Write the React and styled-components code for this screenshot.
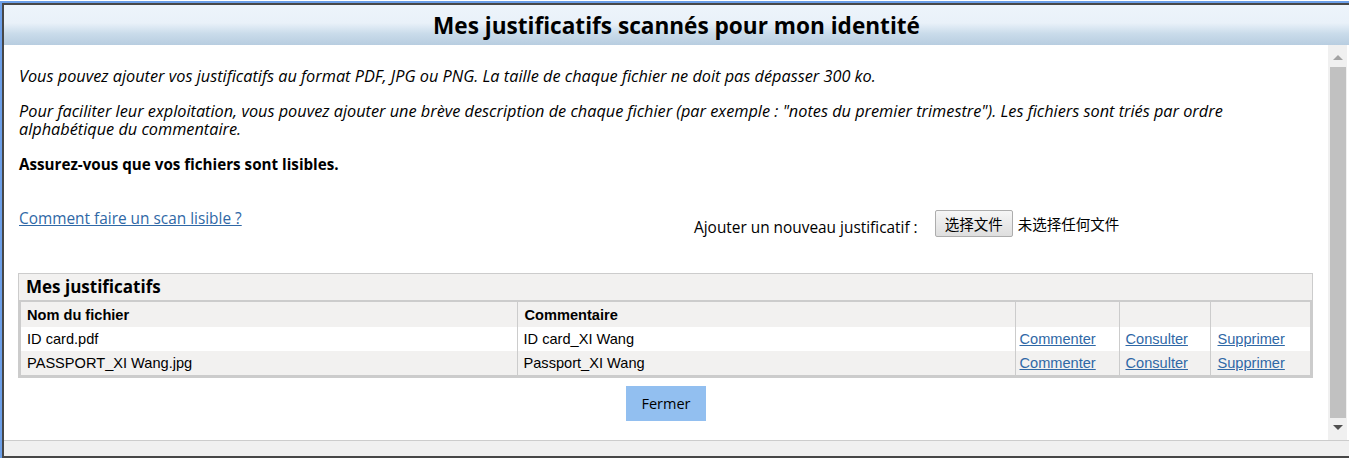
import React from 'react'
import styled, { createGlobalStyle } from 'styled-components'

const GlobalStyle = createGlobalStyle`
	html, body {
		margin: 0;
		padding: 0;
		background: #ffffff;
		overflow: hidden;
	}
	body {
		font-family: "Open Sans", "Noto Sans", sans-serif;
		color: #000;
	}
`

const files = [
	{ name: 'ID card.pdf', comment: 'ID card_XI Wang' },
	{ name: 'PASSPORT_XI Wang.jpg', comment: 'Passport_XI Wang' },
]

const App = () =>
{
	return (
		<>
		<GlobalStyle/>
		<Page>
			<Dialog>
				<Header>
					<Title>Mes justificatifs scannés pour mon identité</Title>
				</Header>
				<Middle>
					<Body>
						<Intro>Vous pouvez ajouter vos justificatifs au format PDF, JPG ou PNG. La taille de chaque fichier ne doit pas dépasser 300 ko.</Intro>
						<Intro>Pour faciliter leur exploitation, vous pouvez ajouter une brève description de chaque fichier (par exemple : "notes du premier trimestre"). Les fichiers sont triés par ordre alphabétique du commentaire.</Intro>
						<Warning>Assurez-vous que vos fichiers sont lisibles.</Warning>

						<ActionRow>
							<HelpLink href="#">Comment faire un scan lisible ?</HelpLink>
							<Upload>
								<UploadLabel>Ajouter un nouveau justificatif :</UploadLabel>
								<FileButton>选择文件</FileButton>
								<FileStatus>未选择任何文件</FileStatus>
							</Upload>
						</ActionRow>

						<Panel>
							<PanelTitle>Mes justificatifs</PanelTitle>
							<Table>
								<colgroup>
									<col style={{width: 497}}/>
									<col style={{width: 498}}/>
									<col style={{width: 104}}/>
									<col style={{width: 91}}/>
									<col/>
								</colgroup>
								<thead>
									<tr>
										<Th>Nom du fichier</Th>
										<Th>Commentaire</Th>
										<Th/>
										<Th/>
										<Th/>
									</tr>
								</thead>
								<tbody>
									{files.map((f, i) => (
										<Row key={f.name} $odd={i % 2 === 1}>
											<Td>{f.name}</Td>
											<Td>{f.comment}</Td>
											<Td $pad={4}><ActionLink href="#">Commenter</ActionLink></Td>
											<Td><ActionLink href="#">Consulter</ActionLink></Td>
											<Td $pad={7}><ActionLink href="#">Supprimer</ActionLink></Td>
										</Row>
									))}
								</tbody>
							</Table>
						</Panel>

						<ButtonRow>
							<CloseButton>Fermer</CloseButton>
						</ButtonRow>
					</Body>
					<Scrollbar>
						<Arrow $up/>
						<Thumb/>
						<Arrow/>
					</Scrollbar>
				</Middle>
				<Footer/>
			</Dialog>
		</Page>
		</>
	)
}

const Page = styled.div`
	padding: 3px 0 0 2px;
	width: 1400px;
`

const Dialog = styled.div`
	display: flex;
	flex-direction: column;
	box-sizing: border-box;
	width: 1352px;
	height: 455px;
	border: 2px solid #474747;
	box-shadow: 0 0 0 2px #6c9fe8;
	background: #fff;
`

const Header = styled.div`
	display: flex;
	justify-content: center;
	align-items: center;
	height: 40px;
	flex-shrink: 0;
	background: linear-gradient(to bottom, #edf4fb 0%, #e9f1f9 45%, #c9dbea 72%, #b8cde0 100%);
`

const Title = styled.h1`
	margin: 0;
	font-size: 22.6px;
	font-weight: 700;
	color: #000;
	margin-right: 3px;
`

const Middle = styled.div`
	display: flex;
	flex: 1;
	min-height: 0;
`

const Body = styled.div`
	flex: 1;
	padding: 22px 15px 0 15px;
	font-size: 15.4px;
`

const Intro = styled.p`
	margin: 0 0 17px;
	font-style: italic;
	font-size: 16.3px;
	line-height: 18px;
`

const Warning = styled.p`
	margin: 0;
	font-size: 15.2px;
	font-weight: 700;
	line-height: 18px;
`

const ActionRow = styled.div`
	display: grid;
	grid-template-columns: 1fr 1fr;
	margin-top: 36px;
	align-items: start;
`

const HelpLink = styled.a`
	color: #2f68a6;
	text-decoration: underline;
	line-height: 18px;
	justify-self: start;
	margin-top: 1px;
`

const Upload = styled.div`
	display: flex;
	align-items: center;
	padding-left: 28px;
`

const UploadLabel = styled.span`
	margin-top: 10px;
	margin-right: 17px;
	line-height: 18px;
`

const FileButton = styled.button`
	font-family: "Noto Sans CJK SC", sans-serif;
	font-size: 14.5px;
	height: 27px;
	padding: 0 9px;
	border: 1px solid #adadad;
	border-radius: 2px;
	background: linear-gradient(to bottom, #f6f6f6, #dedede);
	color: #000;
`

const FileStatus = styled.span`
	font-family: "Noto Sans CJK SC", sans-serif;
	font-size: 14.5px;
	margin-left: 5px;
`

const Panel = styled.div`
	margin: 36px 0 0 -1px;
	border: 1px solid #cccccc;
	background: #f2f1f0;
`

const PanelTitle = styled.div`
	height: 26px;
	line-height: 26px;
	padding-left: 7px;
	font-size: 17px;
	font-weight: 700;
	border-bottom: 2px solid #cccccc;
`

const Table = styled.table`
	table-layout: fixed;
	width: 1293px;
	border-collapse: collapse;
	border: 2px solid #cccccc;
	border-top: none;
	font-family: "Liberation Sans", Arial, sans-serif;
	font-size: 14.6px;
`

const Th = styled.th`
	text-align: left;
	height: 25px;
	padding: 0 7px;
	font-weight: 700;
	background: #f2f1f0;
	border-left: 1px solid #cccccc;
	&:first-child { border-left: none; padding-left: 6px; }
`

const Row = styled.tr`
	background: ${props => props.$odd ? '#f2f1f0' : '#ffffff'};
`

const Td = styled.td`
	height: 24px;
	padding: 0 0 0 ${props => props.$pad ?? 6}px;
	border-left: 1px solid #cccccc;
	white-space: nowrap;
	&:first-child { border-left: none; }
`

const ActionLink = styled.a`
	color: #2f68a6;
	text-decoration: underline;
`

const ButtonRow = styled.div`
	display: flex;
	justify-content: center;
	margin-top: 8px;
`

const CloseButton = styled.button`
	width: 80px;
	height: 35px;
	border: none;
	background: #92bff0;
	font-family: "Open Sans", sans-serif;
	font-size: 14.5px;
	color: #000;
`

const Scrollbar = styled.div`
	display: flex;
	flex-direction: column;
	align-items: center;
	width: 19px;
	margin-right: 5px;
	background: #f0f0f0;
	padding: 6px 0;
	box-sizing: border-box;
`

const Arrow = styled.div`
	width: 0;
	height: 0;
	margin: 4px 0;
	border-left: 5px solid transparent;
	border-right: 5px solid transparent;
	${props => props.$up
		? 'border-bottom: 5px solid #a3a3a3;'
		: 'border-top: 5px solid #505050;'}
`

const Thumb = styled.div`
	flex: 1;
	width: 16px;
	margin: 3px 0;
	background: #c1c1c1;
`

const Footer = styled.div`
	height: 16px;
	flex-shrink: 0;
	background: #f0f0f0;
	border-top: 1px solid #cccccc;
	box-sizing: border-box;
`

export default App
